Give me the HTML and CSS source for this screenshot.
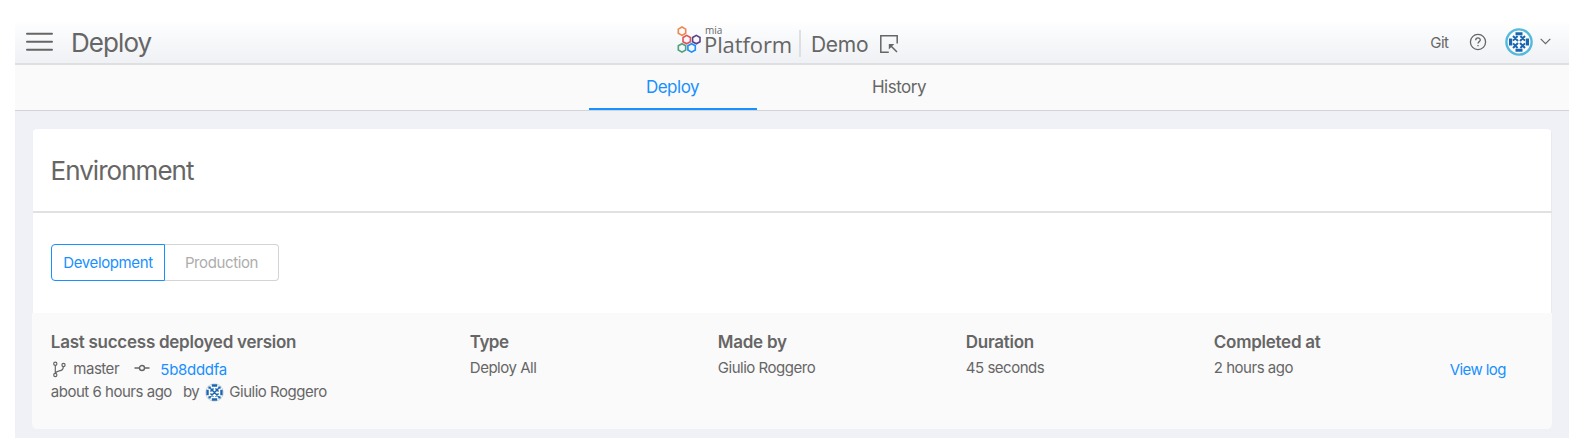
FILE: index.html
```html
<!DOCTYPE html>
<html lang="en">
<head>
<meta charset="utf-8">
<title>Deploy</title>
<link rel="stylesheet" href="styles.css">
</head>
<body>
<div class="page">
  <header class="header">
    <svg class="menu" width="27" height="20" viewBox="0 0 27 20" stroke="#666" stroke-width="2" stroke-linecap="round"><path d="M1 1.700h25M1 9.800h25M1 17.800h25"/></svg>
    <h1 class="title">Deploy</h1>
    <div class="brand">
      <svg class="hexes" width="24" height="28" viewBox="0 0 24 28" fill="none" stroke-width="1.600">
        <path stroke="#ee8850" d="M5 1l3.700 2.100v4.200L5 9.400 1.300 7.300V3.100z"/>
        <path stroke="#e35257" d="M9.700 9.400l3.700 2.100v4.200l-3.700 2.100L6 15.700v-4.200z"/>
        <path stroke="#5a3f8c" d="M19.300 9.400l3.700 2.100v4.200l-3.700 2.100-3.700-2.100v-4.200z"/>
        <path stroke="#4fa27c" d="M5 17.700l3.700 2.100V24L5 26.100 1.300 24v-4.200z"/>
        <path stroke="#1890ff" d="M14.600 17.700l3.700 2.100V24l-3.700 2.100-3.700-2.100v-4.200z"/>
      </svg>
      <div class="wordmark"><span class="mia">mia</span><span class="platform">Platform</span></div>
      <span class="divider"></span>
      <span class="project">Demo</span>
      <svg class="switch" width="18" height="18" viewBox="0 0 18 18" fill="none" stroke="#666" stroke-width="1.500"><path d="M17.200 8.500V.8H.8v16.400h8M17 17l-7-7"/><path d="M8.800 14.500V9h5.500z" fill="#666" stroke="none"/></svg>
    </div>
    <nav class="tools">
      <span class="git">Git</span>
      <svg class="help" width="18" height="18" viewBox="0 0 18 18" fill="none" stroke="#666" stroke-width="1.300"><circle cx="9" cy="9" r="7.600"/><path d="M6.700 7.300C6.700 4.100 11.300 4.300 11.300 7c0 1.700-2.300 1.600-2.300 3.500M9 11.900v1.400"/></svg>
      <svg class="avatar" width="28" height="28" viewBox="0 0 28 28"><circle cx="14" cy="14" r="12.600" fill="#fff" stroke="#54b9dc" stroke-width="2.400"/><path fill="#1b66b0" d="M10.500 4.200h7v3h-7zM10.500 20.800h7v3h-7zM4 10.500h3.200v7H4zM20.800 10.500H24v7h-3.200z"/><path stroke="#1b66b0" stroke-width="2" d="M8 8l5 5M12.600 8L8 12.600M15 13l5-5M20 12.600L15.400 8M8 20l5-5M12.600 20L8 15.400M15 15l5 5M20 15.400L15.400 20"/></svg>
      <svg class="chevron" width="11" height="7" viewBox="0 0 11 7" fill="none" stroke="#666" stroke-width="1.200"><path d="M.7.8l4.800 4.800L10.300.8"/></svg>
    </nav>
  </header>
  <nav class="tabs">
    <a class="tab active">Deploy</a>
    <a class="tab">History</a>
  </nav>
  <main class="content">
    <section class="card">
      <h2 class="heading">Environment</h2>
      <div class="switcher">
        <button class="option selected">Development</button><button class="option">Production</button>
      </div>
      <div class="details">
        <div class="col">
          <h3>Last success deployed version</h3>
          <div class="revision">
            <svg class="branch" width="15" height="17" viewBox="0 0 15 17" fill="none" stroke="#666" stroke-width="1.200"><circle cx="3.300" cy="2.800" r="1.600"/><circle cx="3.300" cy="14" r="1.600"/><circle cx="11.500" cy="4" r="1.600"/><path d="M3.300 4.400v8M11.300 5.600c-.2 3.400-1.300 3.600-4.300 4.400-2 .5-3.300.7-3.700 2.300"/></svg>
            <span class="master">master</span>
            <svg class="commit" width="16" height="8" viewBox="0 0 16 8" fill="none" stroke="#666" stroke-width="1.400"><circle cx="8" cy="4" r="2.500"/><path d="M.5 4h5M10.500 4h5"/></svg>
            <a class="hash">5b8dddfa</a>
          </div>
          <div class="author">
            <span>about 6 hours ago</span><span class="by">by</span>
            <svg class="mini" width="19" height="19" viewBox="0 0 28 28"><circle cx="14" cy="14" r="13" fill="#fff" stroke="#cfd6de" stroke-width="1.500"/><path fill="#1b66b0" d="M10 2h8v3.500h-8zM10 22.500h8V26h-8zM2 10h3.500v8H2zM22.500 10H26v8h-3.500zM5 5h3.500v3.500H5zM19.500 5H23v3.500h-3.500zM5 19.500h3.500V23H5zM19.500 19.500H23V23h-3.500z"/><path stroke="#1b66b0" stroke-width="2.200" d="M7.800 7.800L20.200 20.200M20.200 7.800L7.800 20.200M12.600 8L8 12.600M20 12.600L15.400 8M12.600 20L8 15.400M20 15.400L15.400 20"/></svg>
            <span>Giulio Roggero</span>
          </div>
        </div>
        <div class="col"><h3 class="type">Type</h3><p>Deploy All</p></div>
        <div class="col"><h3>Made by</h3><p>Giulio Roggero</p></div>
        <div class="col"><h3>Duration</h3><p>45 seconds</p></div>
        <div class="col"><h3>Completed at</h3><p>2 hours ago</p></div>
        <a class="log">View log</a>
      </div>
    </section>
  </main>
</div>
</body>
</html>
```
FILE: styles.css
```css
* { box-sizing: border-box; }
body { margin: 0; background: #fff; color: #666; font: 15px/20px Inter, "Liberation Sans", sans-serif; letter-spacing: -.480px; overflow: hidden; }
h1, h2, h3, p { margin: 0; font-weight: 400; }
svg { display: block; flex: none; }
.page { width: 1554px; height: 438px; margin-left: 14.5px; padding-top: 20px; display: flex; flex-direction: column; }
.header { flex: none; height: 45px; display: flex; align-items: center; border-bottom: 2px solid #dedfe1; background: linear-gradient(#fff, #f8f9fb 40%, #f0f1f4); }
.menu { margin-left: 11.500px; }
.title { width: 605px; margin: 2px 0 0 18px; font-size: 26px; line-height: 32px; letter-spacing: -.920px; }
.brand { display: flex; align-items: center; height: 43px; }
.hexes { margin: -3px 0 0 .5px; }
.wordmark { display: flex; flex-direction: column; width: 95px; margin: -3px 0 0 3.500px; font-family: "Open Sans", sans-serif; letter-spacing: 0; }
.mia { font-size: 10px; line-height: 10px; padding-left: 1px; }
.platform { font-size: 22px; line-height: 22px; margin-top: -2px; font-weight: 500; letter-spacing: -.100px; }
.divider { width: 2px; height: 27px; margin-top: 4px; background: #dedfe1; }
.project { margin: 6px 0 0 10px; width: 69px; font-size: 21px; line-height: 26px; letter-spacing: -.300px; }
.switch { margin-top: 5px; }
.tools { display: flex; align-items: center; margin-left: auto; padding-right: 18px; }
.git { margin: 2px 20px 0 0; }
.avatar { margin: 1px 0 0 18px; }
.chevron { margin-left: 7px; }
.tabs { flex: none; height: 46px; display: flex; justify-content: center; gap: 58px; padding-right: 12px; border-bottom: 1px solid #d3d4d6; background: #fafafa; }
.tab { width: 168px; padding-top: 12px; text-align: center; font-size: 17px; line-height: 20px; }
.tab + .tab { padding-left: 1px; }
.tab.active { color: #1890ff; border-bottom: 2px solid #1890ff; }
.content { flex: 1; padding: 18px 17px 0; background: #f0f1f6; }
.card { height: 300px; display: flex; flex-direction: column; border-radius: 5px; background: linear-gradient(90deg, #f0f1f6 1px, #fff 1px, #fff calc(100% - 1px), #e9eaee calc(100% - 1px)); }
.heading { height: 84px; padding: 26px 0 0 18px; margin-left: 1px; border-bottom: 2px solid #e0e1e2; font-size: 26px; line-height: 32px; letter-spacing: -.960px; }
.switcher { display: flex; height: 100px; padding: 31px 0 0 19.500px; }
.option { width: 114px; height: 37px; padding: 1px 0 0; border: 1px solid #d4d4d4; border-left: 0; border-radius: 0 4px 4px 0; background: #fff; color: #adadad; font: inherit; letter-spacing: -.380px; }
.option.selected { border: 1px solid #1890ff; border-radius: 4px 0 0 4px; color: #1890ff; }
.details { flex: 1; display: grid; grid-template-columns: 419px repeat(3, 248px) 236px 1fr; padding: 19px 0 0 19.300px; border-radius: 0 0 5px 5px; background: #fafafa; }
h3 { font-size: 17px; line-height: 20px; font-weight: 600; letter-spacing: -.260px; }
h3.type { letter-spacing: -.550px; }
p { margin-top: 6px; }
.revision { display: flex; align-items: center; height: 20px; margin-top: 7px; }
.branch { margin-left: 1.500px; }
.master { width: 61px; margin-left: 6px; }
.commit { margin-top: -2px; }
.hash { margin: 2px 0 0 10px; color: #1890ff; letter-spacing: -.280px; }
.author { display: flex; align-items: center; height: 20px; margin-top: 3px; letter-spacing: -.480px; }
.by { margin-left: 11px; }
.mini { margin: 0 5px 0 6px; }
.log { margin-top: 28px; color: #1890ff; letter-spacing: -.600px; }
```
